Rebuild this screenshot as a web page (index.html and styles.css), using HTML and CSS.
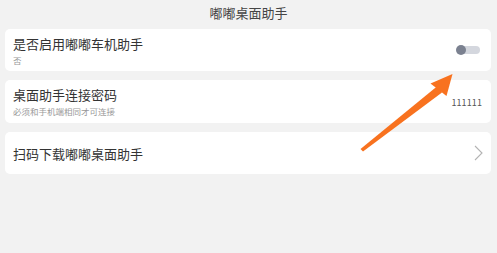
FILE: index.html
```html
<!DOCTYPE html>
<html lang="zh-CN">
<head>
<meta charset="utf-8">
<link rel="stylesheet" href="styles.css">
</head>
<body>
<div class="page">
  <div class="header">嘟嘟桌面助手</div>
  <div class="list">
    <div class="card">
      <div class="texts">
        <div class="title">是否启用嘟嘟车机助手</div>
        <div class="sub">否</div>
      </div>
      <div class="toggle"><span class="knob"></span></div>
    </div>
    <div class="card">
      <div class="texts">
        <div class="title">桌面助手连接密码</div>
        <div class="sub">必须和手机端相同才可连接</div>
      </div>
      <div class="value">111111</div>
    </div>
    <div class="card card-link">
      <div class="texts">
        <div class="title">扫码下载嘟嘟桌面助手</div>
      </div>
      <svg class="chev" width="9" height="16" viewBox="0 0 9 16"><path d="M1 1 L8 8 L1 15" fill="none" stroke="#b3b3b3" stroke-width="1.1"/></svg>
    </div>
  </div>
  <svg class="arrow" width="497" height="253" viewBox="0 0 497 253">
    <polygon points="360.5,149 363,151.5 442,92.5 437.5,86" fill="#f8721f"/>
    <polygon points="452.5,74 430.5,83.5 446.5,96" fill="#f8721f"/>
  </svg>
</div>
</body>
</html>
```
FILE: styles.css
```css
* { box-sizing: border-box; }
html, body {
  margin: 0;
  padding: 0;
  background: #f2f2f2;
}
.page {
  position: relative;
  width: 497px;
  height: 253px;
  font-family: "Noto Sans CJK SC", "Noto Sans", sans-serif;
  color: #333;
}
.header {
  height: 29px;
  padding-top: 5px;
  line-height: 16px;
  font-size: 13px;
  text-align: center;
  color: #444;
}
.list {
  display: flex;
  flex-direction: column;
  gap: 9px;
  padding: 0 6px 0 5px;
}
.card {
  height: 42px;
  background: #fff;
  border-radius: 5px;
  display: flex;
  align-items: center;
  justify-content: space-between;
  padding: 0 9px 0 8px;
}
.card:nth-child(2) { height: 43px; }
.texts {
  display: flex;
  flex-direction: column;
}
.title {
  font-size: 13px;
  line-height: 16px;
  color: #333;
}
.sub {
  margin-top: 3px;
  font-size: 8.5px;
  line-height: 10px;
  color: #999;
}
.card .texts .title:only-child { margin-top: 2px; }
.toggle {
  position: relative;
  width: 23px;
  height: 8px;
  border-radius: 4px;
  background: #d4d7de;
  margin-right: 2px;
}
.knob {
  position: absolute;
  left: -1px;
  top: -1px;
  width: 10px;
  height: 10px;
  border-radius: 50%;
  background: #7b8190;
}
.value {
  font-size: 9px;
  line-height: 12px;
  color: #555;
  margin-top: 2px;
  letter-spacing: 0.1px;
}
.chev { margin-right: -1px; }
.arrow {
  position: absolute;
  left: 0;
  top: 0;
  pointer-events: none;
}
```
